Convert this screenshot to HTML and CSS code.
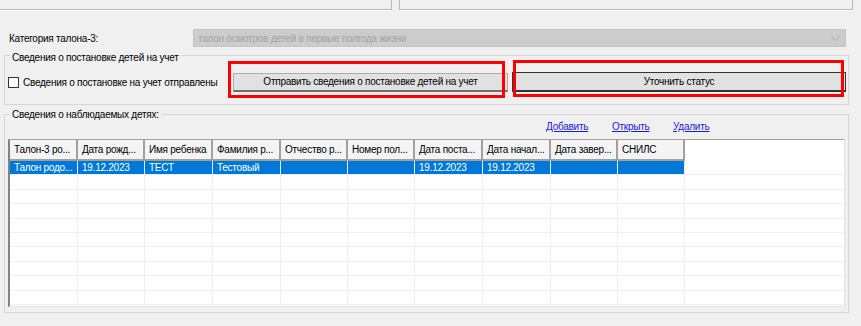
FILE: index.html
```html
<!DOCTYPE html>
<html lang="ru">
<head>
  <meta charset="UTF-8" />
  <title>Талон-3</title>
  <link rel="stylesheet" href="styles.css">
</head>
<body>
  <div class="page">
    <div class="top-panels">
      <div class="panel panel-left"></div>
      <div class="panel panel-right"></div>
    </div>

    <div class="category-row">
      <label class="category-label">Категория талона-3:</label>
      <div class="combo">
        <span class="combo-text">талон осмотров детей в первые полгода жизни</span>
        <svg class="combo-arrow" width="9" height="5" viewBox="0 0 9 5"><path d="M0.5 0.5 L4.5 4.5 L8.5 0.5" fill="none" stroke="#a8a8a8" stroke-width="1"/></svg>
      </div>
    </div>

    <fieldset class="group group-send">
      <legend>Сведения о постановке детей на учет</legend>
      <div class="send-row">
        <label class="check">
          <span class="check-box"></span>
          <span>Сведения о постановке на учет отправлены</span>
        </label>
        <button class="btn btn-send">Отправить сведения о постановке детей на учет</button>
        <button class="btn btn-status">Уточнить статус</button>
      </div>
    </fieldset>

    <fieldset class="group group-kids">
      <legend>Сведения о наблюдаемых детях:</legend>
      <div class="links">
        <a class="link link-add" href="#">Добавить</a>
        <a class="link link-open" href="#">Открыть</a>
        <a class="link" href="#">Удалить</a>
      </div>
      <div class="grid">
        <div class="row head">
          <div class="cell">Талон-3 ро...</div>
          <div class="cell">Дата рожд...</div>
          <div class="cell">Имя ребенка</div>
          <div class="cell">Фамилия р...</div>
          <div class="cell">Отчество р...</div>
          <div class="cell">Номер пол...</div>
          <div class="cell">Дата поста...</div>
          <div class="cell">Дата начал...</div>
          <div class="cell">Дата завер...</div>
          <div class="cell">СНИЛС</div>
          <div class="filler"></div>
        </div>
        <div class="row selected">
          <div class="cell">Талон родо...</div>
          <div class="cell">19.12.2023</div>
          <div class="cell">ТЕСТ</div>
          <div class="cell">Тестовый</div>
          <div class="cell"></div>
          <div class="cell"></div>
          <div class="cell">19.12.2023</div>
          <div class="cell">19.12.2023</div>
          <div class="cell"></div>
          <div class="cell"></div>
          <div class="filler"></div>
        </div>
        <div class="row"><div class="cell"></div><div class="cell"></div><div class="cell"></div><div class="cell"></div><div class="cell"></div><div class="cell"></div><div class="cell"></div><div class="cell"></div><div class="cell"></div><div class="cell"></div><div class="filler"></div></div>
        <div class="row"><div class="cell"></div><div class="cell"></div><div class="cell"></div><div class="cell"></div><div class="cell"></div><div class="cell"></div><div class="cell"></div><div class="cell"></div><div class="cell"></div><div class="cell"></div><div class="filler"></div></div>
        <div class="row"><div class="cell"></div><div class="cell"></div><div class="cell"></div><div class="cell"></div><div class="cell"></div><div class="cell"></div><div class="cell"></div><div class="cell"></div><div class="cell"></div><div class="cell"></div><div class="filler"></div></div>
        <div class="row"><div class="cell"></div><div class="cell"></div><div class="cell"></div><div class="cell"></div><div class="cell"></div><div class="cell"></div><div class="cell"></div><div class="cell"></div><div class="cell"></div><div class="cell"></div><div class="filler"></div></div>
        <div class="row"><div class="cell"></div><div class="cell"></div><div class="cell"></div><div class="cell"></div><div class="cell"></div><div class="cell"></div><div class="cell"></div><div class="cell"></div><div class="cell"></div><div class="cell"></div><div class="filler"></div></div>
        <div class="row"><div class="cell"></div><div class="cell"></div><div class="cell"></div><div class="cell"></div><div class="cell"></div><div class="cell"></div><div class="cell"></div><div class="cell"></div><div class="cell"></div><div class="cell"></div><div class="filler"></div></div>
        <div class="row"><div class="cell"></div><div class="cell"></div><div class="cell"></div><div class="cell"></div><div class="cell"></div><div class="cell"></div><div class="cell"></div><div class="cell"></div><div class="cell"></div><div class="cell"></div><div class="filler"></div></div>
        <div class="row"><div class="cell"></div><div class="cell"></div><div class="cell"></div><div class="cell"></div><div class="cell"></div><div class="cell"></div><div class="cell"></div><div class="cell"></div><div class="cell"></div><div class="cell"></div><div class="filler"></div></div>
        <div class="row"><div class="cell"></div><div class="cell"></div><div class="cell"></div><div class="cell"></div><div class="cell"></div><div class="cell"></div><div class="cell"></div><div class="cell"></div><div class="cell"></div><div class="cell"></div><div class="filler"></div></div>
      </div>
    </fieldset>

    <!-- красные рамки-пометки поверх кнопок -->
    <div class="mark mark-send"></div>
    <div class="mark mark-status"></div>
  </div>
</body>
</html>
```

FILE: styles.css
```css
body {
  margin: 0;
  background: #f0f0f0;
  font-family: 'Liberation Sans', Arial, sans-serif;
  font-size: 10px;
  letter-spacing: -0.25px;
  color: #000;
}

.page {
  position: relative;
  width: 861px;
  height: 326px;
  overflow: hidden;
}

/* верхние панели (обрезаны) */
.top-panels {
  display: flex;
  height: 10px;
}

.panel {
  box-sizing: border-box;
  height: 10px;
  border-bottom: 1px solid #b9b9b9;
  box-shadow: 0 1px 0 #fff;
}

.panel-left {
  width: 392px;
  border-right: 1px solid #b9b9b9;
}

.panel-right {
  width: 454px;
  margin-left: 7px;
  border-left: 1px solid #b9b9b9;
  border-right: 1px solid #b9b9b9;
}

/* категория */
.category-row {
  display: flex;
  align-items: center;
  margin-top: 19px;
  padding-left: 9px;
  height: 18px;
}

.category-label {
  width: 184px;
}

.combo {
  box-sizing: border-box;
  display: flex;
  align-items: center;
  width: 653px;
  height: 18px;
  padding: 0 4px;
  background: #cccccc;
  border: 1px solid #c4c4c4;
  color: #a3a3a3;
}

.combo-text {
  flex: 1;
}

.combo-arrow {
  margin-right: 1px;
}

/* группы */
.group {
  box-sizing: border-box;
  width: 845px;
  margin: 0 0 0 4px;
  padding: 0;
  border: 1px solid #d5d5d5;
  min-width: 0;
}

.group legend {
  margin-left: 5px;
  padding: 4px 2px 0;
  line-height: 13px;
  color: #000;
}

.group-send {
  margin-top: 0;
}

.send-row {
  display: flex;
  align-items: center;
  height: 20px;
  margin-top: 8px;
  margin-bottom: 12px;
}

.check {
  display: flex;
  align-items: center;
  width: 225px;
  margin-left: 3px;
}

.check-box {
  box-sizing: border-box;
  width: 11px;
  height: 11px;
  margin-right: 4px;
  background: #fff;
  border: 1px solid #333;
}

.btn {
  box-sizing: border-box;
  height: 19px;
  padding: 0;
  font: inherit;
  letter-spacing: inherit;
  color: #000;
  background: #e1e1e1;
  border: 1px solid #adadad;
  border-bottom: 2px solid #6f6f6f;
}

.btn-send {
  width: 275px;
}

.btn-status {
  width: 334px;
  height: 20px;
  margin-left: 4px;
  border: 1px solid #333;
  border-bottom: 2px solid #333;
}

.group-kids {
  margin-top: 4px;
  padding-bottom: 5px;
}

.group-kids legend {
  padding-top: 0;
  line-height: 11px;
}

.links {
  display: flex;
  height: 11px;
  line-height: 11px;
  margin-top: 1px;
  padding-left: 541px;
}

.link {
  color: #1a1ad8;
  text-decoration: underline;
}

.link-add {
  width: 66px;
}

.link-open {
  width: 61px;
}

/* таблица */
.grid {
  box-sizing: border-box;
  height: 168px;
  margin: 7px 3px 0;
  overflow: hidden;
  background: #fff;
  border-left: 2px solid #828282;
  border-top: 1px solid #a0a0a0;
  border-right: 1px solid #e3e3e3;
  border-bottom: 1px solid #e3e3e3;
}

.row {
  display: grid;
  grid-template-columns: 68px 67px 68px 68px 67px 67px 68px 68px 67px 67px 1fr;
  height: 14.4px;
}

.cell {
  box-sizing: border-box;
  padding-left: 4px;
  line-height: 13px;
  white-space: nowrap;
  overflow: hidden;
  border-right: 1px solid #f0f0f0;
  border-bottom: 1px solid #f0f0f0;
}

.filler {
  border-bottom: 1px solid #f0f0f0;
}

.head {
  height: 21px;
}

.head .cell {
  line-height: 19px;
  background: #f4f4f4;
  border-right: 2px solid #a0a0a0;
  border-bottom: 2px solid #a0a0a0;
}

.head .filler {
  border-bottom: none;
}

.selected .cell {
  background: #0078d7;
  color: #fff;
  border-color: #e8f0f8;
}

/* красные пометки */
.mark {
  position: absolute;
  box-sizing: border-box;
  border: 3px solid #ff0000;
}

.mark-send {
  left: 228px;
  top: 61px;
  width: 277px;
  height: 37px;
}

.mark-status {
  left: 513px;
  top: 60px;
  width: 331px;
  height: 37px;
}
```
